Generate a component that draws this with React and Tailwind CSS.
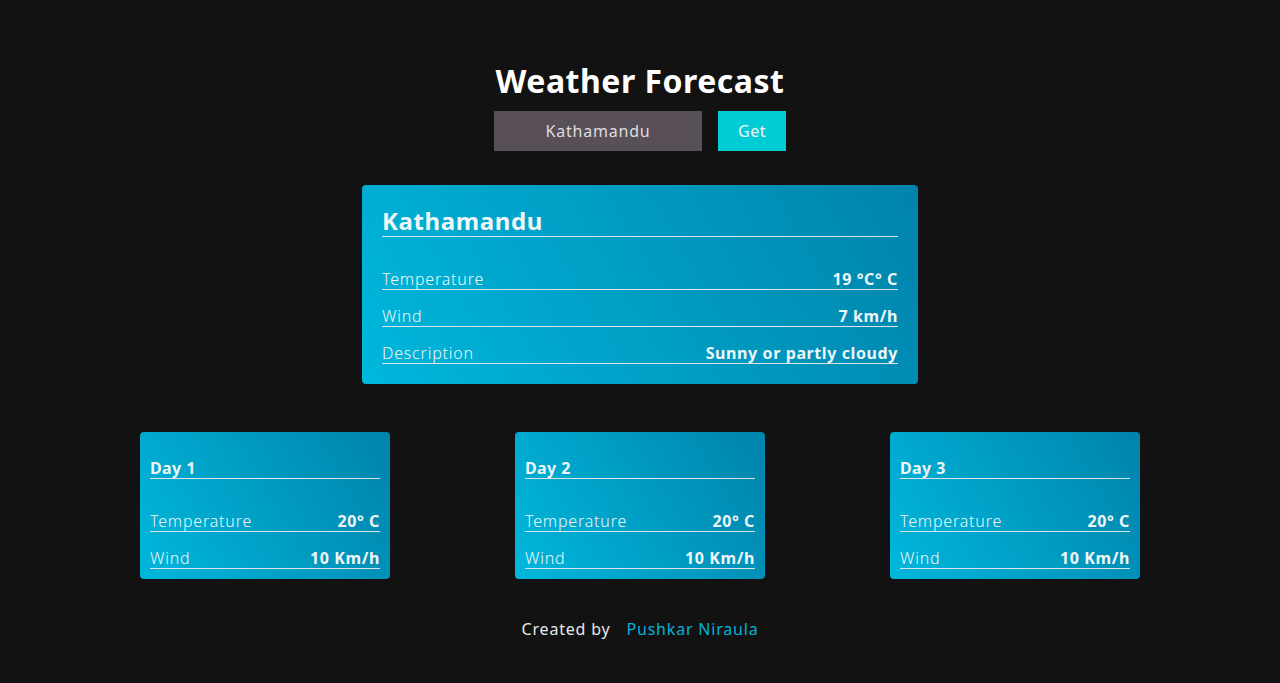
const current = {
  city: 'Kathamandu',
  rows: [
    ['Temperature', '19 °C° C'],
    ['Wind', '7 km/h'],
    ['Description', 'Sunny or partly cloudy'],
  ],
}

const forecast = [
  { day: 'Day 1', temp: '20° C', wind: '10 Km/h' },
  { day: 'Day 2', temp: '20° C', wind: '10 Km/h' },
  { day: 'Day 3', temp: '20° C', wind: '10 Km/h' },
]

const card = 'rounded-[4px] bg-[linear-gradient(60deg,#00b7dc,#0083ab)] text-[#eef6f8]'

function Row({ label, value, first }) {
  return (
    <div
      className={`flex justify-between items-end border-b border-[#d9e4e8] text-[16px] leading-[20px] ${first ? 'mt-[32px]' : 'mt-[16px]'}`}
    >
      <span className="font-light tracking-[0.8px]">{label}</span>
      <span className="font-bold tracking-[0.6px]">{value}</span>
    </div>
  )
}

export default function App() {
  return (
    <div
      className="min-h-screen bg-[#121212] flex flex-col items-center pt-[61px] pb-10"
      style={{ fontFamily: '"Noto Sans", "Open Sans", sans-serif' }}
    >
      <h1 className="text-[32px] leading-[40px] font-bold text-white tracking-[0.5px]">
        Weather Forecast
      </h1>

      <div className="mt-[10px] flex gap-4">
        <input
          defaultValue="Kathamandu"
          className="w-[208px] h-10 bg-[#584f58] text-[#dedede] text-center text-[16px] tracking-[0.8px] outline-none"
        />
        <button className="w-[68px] h-10 bg-[#00ccd5] text-[#f2f2f2] text-[16px] tracking-[0.5px]">
          Get
        </button>
      </div>

      <div className={`${card} mt-[34px] w-[556px] px-5 pt-5 pb-5`}>
        <h2 className="text-[24px] leading-[31px] font-bold border-b border-[#d9e4e8] tracking-[0.6px]">
          {current.city}
        </h2>
        {current.rows.map(([label, value], i) => (
          <Row key={label} label={label} value={value} first={i === 0} />
        ))}
      </div>

      <div className="mt-12 w-[1000px] flex justify-between">
        {forecast.map((f) => (
          <div key={f.day} className={`${card} w-[250px] p-[10px]`}>
            <h3 className="pt-4 text-[16px] leading-[20px] font-bold border-b border-[#d9e4e8] tracking-[0.4px]">
              {f.day}
            </h3>
            <Row label="Temperature" value={f.temp} first />
            <Row label="Wind" value={f.wind} />
          </div>
        ))}
      </div>

      <p className="mt-10 text-[16px] leading-[20px] text-[#e8e8e8] tracking-[0.8px]">
        Created by
        <span className="ml-4 text-[#00b4d8]">Pushkar Niraula</span>
      </p>
    </div>
  )
}
